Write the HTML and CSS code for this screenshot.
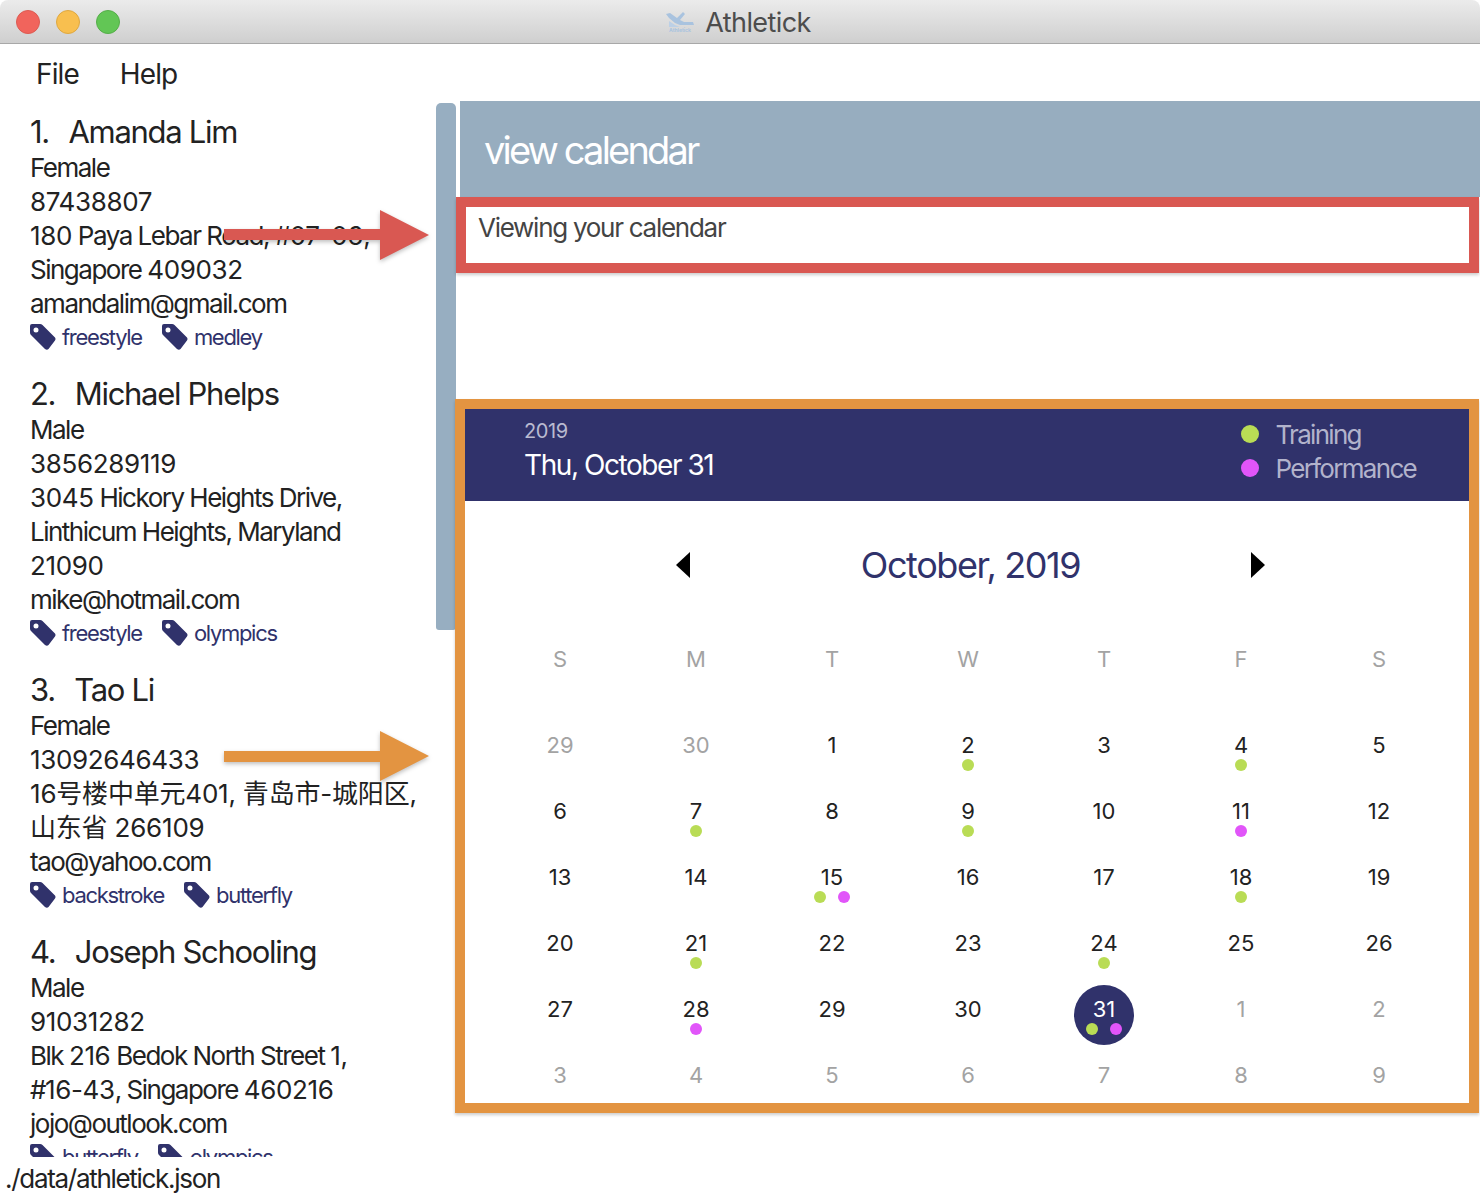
FILE: index.html

```html
<!DOCTYPE html>
<html lang="en">

<head>
    <meta charset="UTF-8">
    <title>Athletick</title>
    <link rel="stylesheet" href="styles.css">
</head>

<body>
    <div class="titlebar">
        <div class="lights">
            <span class="light red"></span>
            <span class="light yellow"></span>
            <span class="light green"></span>
        </div>
        <div class="app-title">
            <svg class="app-logo" width="28" height="20" viewBox="0 0 28 20">
                <path d="M0 2 L4 1 L11 6 L17 0 L19 2 L14 8 L18 10 L27 10 L28 13 L14 13 L9 11 L3 6 Z" fill="#a9c3df" />
                <path d="M3 9 L9 13 L14 15 L3 15 Z" fill="#bcd0e6" />
                <text x="14" y="20" text-anchor="middle" class="logo-text">Athletick</text>
            </svg>
            <span>Athletick</span>
        </div>
    </div>

    <div class="menubar">
        <span class="menu-item">File</span>
        <span class="menu-item">Help</span>
    </div>

    <div class="main">
        <div class="left-pane">
            <ul class="person-list">
                <li class="person">
                    <div class="person-name"><span class="person-no">1.</span>Amanda Lim</div>
                    <div class="person-line">Female</div>
                    <div class="person-line"><span class="num">87438807</span></div>
                    <div class="person-line"><span class="num">180</span> Paya Lebar Road, #<span class="num">07-06</span>,</div>
                    <div class="person-line">Singapore <span class="num">409032</span></div>
                    <div class="person-line">amandalim@gmail.com</div>
                    <div class="tags">
                        <span class="tag"><svg class="tag-icon" viewBox="0 0 26 26"><use href="#tagShape" /></svg>freestyle</span>
                        <span class="tag"><svg class="tag-icon" viewBox="0 0 26 26"><use href="#tagShape" /></svg>medley</span>
                    </div>
                </li>
                <li class="person">
                    <div class="person-name"><span class="person-no">2.</span>Michael Phelps</div>
                    <div class="person-line">Male</div>
                    <div class="person-line"><span class="num">3856289119</span></div>
                    <div class="person-line"><span class="num">3045</span> Hickory Heights Drive,</div>
                    <div class="person-line">Linthicum Heights, Maryland</div>
                    <div class="person-line"><span class="num">21090</span></div>
                    <div class="person-line">mike@hotmail.com</div>
                    <div class="tags">
                        <span class="tag"><svg class="tag-icon" viewBox="0 0 26 26"><use href="#tagShape" /></svg>freestyle</span>
                        <span class="tag"><svg class="tag-icon" viewBox="0 0 26 26"><use href="#tagShape" /></svg>olympics</span>
                    </div>
                </li>
                <li class="person">
                    <div class="person-name"><span class="person-no">3.</span>Tao Li</div>
                    <div class="person-line">Female</div>
                    <div class="person-line"><span class="num">13092646433</span></div>
                    <div class="person-line cjk">16号楼中单元401, 青岛市-城阳区,</div>
                    <div class="person-line cjk">山东省 266109</div>
                    <div class="person-line">tao@yahoo.com</div>
                    <div class="tags">
                        <span class="tag"><svg class="tag-icon" viewBox="0 0 26 26"><use href="#tagShape" /></svg>backstroke</span>
                        <span class="tag"><svg class="tag-icon" viewBox="0 0 26 26"><use href="#tagShape" /></svg>butterfly</span>
                    </div>
                </li>
                <li class="person">
                    <div class="person-name"><span class="person-no">4.</span>Joseph Schooling</div>
                    <div class="person-line">Male</div>
                    <div class="person-line"><span class="num">91031282</span></div>
                    <div class="person-line">Blk <span class="num">216</span> Bedok North Street <span class="num">1</span>,</div>
                    <div class="person-line">#<span class="num">16-43</span>, Singapore <span class="num">460216</span></div>
                    <div class="person-line">jojo@outlook.com</div>
                    <div class="tags">
                        <span class="tag"><svg class="tag-icon" viewBox="0 0 26 26"><use href="#tagShape" /></svg>butterfly</span>
                        <span class="tag"><svg class="tag-icon" viewBox="0 0 26 26"><use href="#tagShape" /></svg>olympics</span>
                    </div>
                </li>
            </ul>
            <div class="scroll-track">
                <div class="scroll-thumb"></div>
            </div>
        </div>

        <div class="right-pane">
            <div class="command-box">view calendar</div>
            <div class="result-box">Viewing your calendar</div>

            <div class="calendar-box">
                <div class="cal-header">
                    <div class="cal-date">
                        <div class="cal-year">2019</div>
                        <div class="cal-today">Thu, October 31</div>
                    </div>
                    <div class="legend">
                        <div class="legend-row"><span class="dot big train"></span>Training</div>
                        <div class="legend-row"><span class="dot big perf"></span>Performance</div>
                    </div>
                </div>

                <div class="month-row">
                    <svg class="month-arrow" width="14" height="26" viewBox="0 0 14 26"><path d="M14 0 V26 L0 13 Z" /></svg>
                    <div class="month-name">October, 2019</div>
                    <svg class="month-arrow" width="14" height="26" viewBox="0 0 14 26"><path d="M0 0 V26 L14 13 Z" /></svg>
                </div>

                <div class="cal-grid weekdays">
                    <div>S</div><div>M</div><div>T</div><div>W</div><div>T</div><div>F</div><div>S</div>
                </div>

                <div class="cal-grid days">
                    <div class="day muted">29</div>
                    <div class="day muted">30</div>
                    <div class="day">1</div>
                    <div class="day">2<div class="dots"><span class="dot train"></span></div></div>
                    <div class="day">3</div>
                    <div class="day">4<div class="dots"><span class="dot train"></span></div></div>
                    <div class="day">5</div>

                    <div class="day">6</div>
                    <div class="day">7<div class="dots"><span class="dot train"></span></div></div>
                    <div class="day">8</div>
                    <div class="day">9<div class="dots"><span class="dot train"></span></div></div>
                    <div class="day">10</div>
                    <div class="day">11<div class="dots"><span class="dot perf"></span></div></div>
                    <div class="day">12</div>

                    <div class="day">13</div>
                    <div class="day">14</div>
                    <div class="day">15<div class="dots"><span class="dot train"></span><span class="dot perf"></span></div></div>
                    <div class="day">16</div>
                    <div class="day">17</div>
                    <div class="day">18<div class="dots"><span class="dot train"></span></div></div>
                    <div class="day">19</div>

                    <div class="day">20</div>
                    <div class="day">21<div class="dots"><span class="dot train"></span></div></div>
                    <div class="day">22</div>
                    <div class="day">23</div>
                    <div class="day">24<div class="dots"><span class="dot train"></span></div></div>
                    <div class="day">25</div>
                    <div class="day">26</div>

                    <div class="day">27</div>
                    <div class="day">28<div class="dots"><span class="dot perf"></span></div></div>
                    <div class="day">29</div>
                    <div class="day">30</div>
                    <div class="day today">31<div class="dots"><span class="dot train"></span><span class="dot perf"></span></div></div>
                    <div class="day muted">1</div>
                    <div class="day muted">2</div>

                    <div class="day muted">3</div>
                    <div class="day muted">4</div>
                    <div class="day muted">5</div>
                    <div class="day muted">6</div>
                    <div class="day muted">7</div>
                    <div class="day muted">8</div>
                    <div class="day muted">9</div>
                </div>
            </div>
        </div>
    </div>

    <div class="statusbar">./data/athletick.json</div>

    <!-- callout arrows drawn over the window -->
    <svg class="callout red-arrow" width="210" height="54" viewBox="0 0 210 54"><path d="M0 19 H156 V0 L205 25 L156 50 V30 H0 Z" /></svg>
    <svg class="callout orange-arrow" width="210" height="54" viewBox="0 0 210 54"><path d="M0 20 H156 V0 L205 25 L156 50 V31 H0 Z" /></svg>

    <svg width="0" height="0" class="defs">
        <defs>
            <path id="tagShape" fill-rule="evenodd" d="M2 0 H10 Q11.500 0 12.500 1 L25 13.500 Q26 15 25 16.500 L18.500 25 Q17 26.500 15 25 L1 11 Q0 10 0 8.500 V2 Q0 0 2 0 Z M6 3.500 A2.500 2.500 0 1 0 6 8.500 A2.500 2.500 0 1 0 6 3.500 Z" />
        </defs>
    </svg>
</body>

</html>
```

FILE: styles.css

```css
* {
    box-sizing: border-box;
}

body {
    margin: 0;
    padding: 0;
    width: 1480px;
    height: 1200px;
    position: relative;
    overflow: hidden;
    background-color: #fff;
    color: #222;
    font-family: Inter, "Noto Sans CJK SC", sans-serif;
}

.titlebar {
    height: 44px;
    display: flex;
    align-items: center;
    justify-content: center;
    position: relative;
    border-bottom: 1px solid #a8a8a8;
    border-radius: 8px 8px 0 0;
    background: linear-gradient(#ebebeb, #cfcfcf);
}

.lights {
    position: absolute;
    left: 16px;
    top: 10px;
    display: flex;
    gap: 16px;
}

.light {
    width: 24px;
    height: 24px;
    border-radius: 50%;
}

.light.red {
    background-color: #f1645c;
    border: 1px solid #dd5b52;
}

.light.yellow {
    background-color: #f8bf4f;
    border: 1px solid #dfa840;
}

.light.green {
    background-color: #62c655;
    border: 1px solid #55ae49;
}

.app-title {
    display: flex;
    align-items: center;
    gap: 11px;
    font-size: 27px;
    letter-spacing: -0.6px;
    color: #4d4d4d;
    padding-top: 1px;
    margin-right: 3px;
}

.logo-text {
    font-size: 5px;
    font-weight: 700;
    fill: #a9c3df;
    letter-spacing: 0;
}

.menubar {
    height: 57px;
    display: flex;
    align-items: center;
    gap: 41px;
    padding-left: 36px;
    padding-top: 3px;
    font-size: 28px;
    letter-spacing: -0.9px;
}

.main {
    display: flex;
    height: 1056px;
}

.left-pane {
    width: 456px;
    display: flex;
    flex-shrink: 0;
}

.person-list {
    width: 436px;
    list-style: none;
    margin: 0;
    padding: 0 0 0 30px;
    overflow: hidden;
}

.person {
    margin-bottom: 8px;
}

.person-name {
    height: 50px;
    padding-top: 9px;
    font-size: 31px;
    line-height: 44px;
    letter-spacing: -1.3px;
}

.person-no {
    margin-right: 19.500px;
}

.person-line {
    height: 34px;
    font-size: 26px;
    line-height: 34px;
    letter-spacing: -1.5px;
    white-space: nowrap;
}

.person-line .num {
    letter-spacing: -0.35px;
}

.person-line.cjk {
    letter-spacing: -0.2px;
}

.tags {
    display: flex;
    gap: 20px;
    height: 34px;
    padding-bottom: 2px;
    align-items: center;
    color: #30326b;
    font-size: 22px;
    letter-spacing: -1.3px;
}

.tag {
    display: flex;
    align-items: center;
    gap: 6px;
}

.tag-icon {
    width: 26px;
    height: 26px;
    fill: #30326b;
}

.scroll-track {
    width: 20px;
    padding-top: 2px;
}

.scroll-thumb {
    height: 527px;
    background-color: #97aec1;
    border-radius: 5px 5px 3px 3px;
}

.right-pane {
    flex: 1;
    min-width: 0;
}

.command-box {
    margin-left: 4px;
    height: 96px;
    padding-left: 24px;
    background-color: #97adbf;
    color: #fff;
    font-size: 38px;
    line-height: 98px;
    letter-spacing: -2.8px;
}

.result-box {
    width: 1023px;
    height: 76px;
    padding: 5px 12px;
    border: 10px solid #d95852;
    color: #444;
    font-size: 26px;
    letter-spacing: -1.27px;
    box-shadow: 0 2px 3px rgba(0, 0, 0, 0.2);
}

.calendar-box {
    width: 1024px;
    height: 714px;
    margin-top: 126px;
    margin-left: -1px;
    border: 10px solid #e39441;
    box-shadow: 0 2px 3px rgba(0, 0, 0, 0.2);
}

.cal-header {
    height: 92px;
    display: flex;
    justify-content: space-between;
    padding: 8px 53px 0 59px;
    background-color: #30326b;
    color: #fff;
}

.cal-year {
    font-size: 20px;
    line-height: 28px;
    letter-spacing: -0.4px;
    color: #b9bad0;
}

.cal-today {
    font-size: 28px;
    line-height: 40px;
    letter-spacing: -1.43px;
}

.legend {
    color: #b2b3cb;
    font-size: 26px;
    letter-spacing: -1.7px;
}

.legend-row {
    display: flex;
    align-items: center;
    gap: 16px;
    height: 34px;
}

.dot {
    display: block;
    width: 12px;
    height: 12px;
    border-radius: 50%;
}

.dot.big {
    width: 18px;
    height: 18px;
    margin-left: 1px;
}

.dot.train {
    background-color: #b9dc55;
}

.dot.perf {
    background-color: #e155f9;
}

.month-row {
    height: 128px;
    display: flex;
    align-items: center;
    padding: 0 204px 0 211px;
    justify-content: space-between;
}

.month-name {
    color: #30326b;
    font-size: 36px;
    letter-spacing: -1.4px;
}

.cal-grid {
    display: grid;
    grid-template-columns: repeat(5, 136px) 138px 138px;
    margin-left: 27px;
    text-align: center;
}

.weekdays {
    height: 62px;
    color: #a3a3a3;
    font-size: 22px;
    line-height: 60px;
}

.days {
    grid-auto-rows: 66px;
    padding-top: 30px;
}

.day {
    height: 60px;
    width: 60px;
    justify-self: center;
    border-radius: 50%;
    padding-top: 11px;
    font-size: 22px;
    line-height: 26px;
    color: #222;
}

.day.muted {
    color: #a3a3a3;
}

.day.today {
    background-color: #30326b;
    color: #fff;
}

.dots {
    display: flex;
    justify-content: center;
    gap: 12px;
    margin-top: 1px;
}

.callout {
    position: absolute;
    left: 224px;
    fill: #d95852;
    filter: drop-shadow(0 2px 2px rgba(0, 0, 0, 0.25));
}

.red-arrow {
    top: 210px;
}

.orange-arrow {
    top: 731px;
    fill: #e39441;
}

.statusbar {
    height: 44px;
    padding: 5px 0 0 5px;
    background-color: #fff;
    font-size: 26px;
    line-height: 34px;
    letter-spacing: -1.3px;
}

.defs {
    position: absolute;
}
```
